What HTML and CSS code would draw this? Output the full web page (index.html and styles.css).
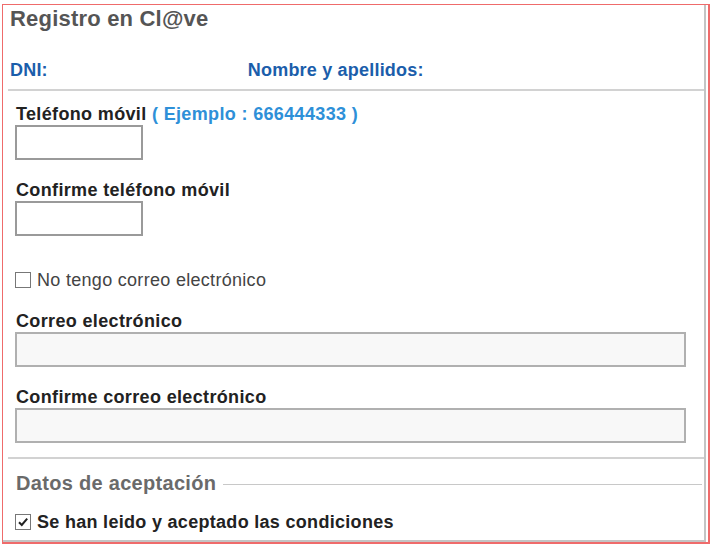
FILE: index.html
```html
<!DOCTYPE html>
<html lang="es">
<head>
  <meta charset="UTF-8" />
  <title>Registro en Cl@ve</title>
  <link rel="stylesheet" href="styles.css">
</head>
<body>
  <div class="frame">
    <div class="panel">
      <h1 class="title">Registro en Cl@ve</h1>
      <div class="ident">
        <span class="dni">DNI:</span>
        <span class="nombre">Nombre y apellidos:</span>
      </div>
      <hr class="sep">

      <div class="form">
        <label class="label first">Teléfono móvil <span class="hint">( Ejemplo : 666444333 )</span></label>
        <input type="text" class="input short">

        <label class="label">Confirme teléfono móvil</label>
        <input type="text" class="input short">

        <div class="check-row plain">
          <span class="box"></span>
          <span>No tengo correo electrónico</span>
        </div>

        <label class="label after-check">Correo electrónico</label>
        <input type="text" class="input wide">

        <label class="label">Confirme correo electrónico</label>
        <input type="text" class="input wide">
      </div>

      <hr class="sep lower">

      <div class="legend-row">
        <span class="legend">Datos de aceptación</span>
        <span class="legend-line"></span>
      </div>
      <div class="check-row strong">
        <span class="box">
          <svg width="12" height="12" viewBox="0 0 12 12"><path d="M2 6.2 L4.8 9 L10.2 2.6" fill="none" stroke="#222" stroke-width="2"/></svg>
        </span>
        <span>Se han leido y aceptado las condiciones</span>
      </div>
    </div>
  </div>
</body>
</html>
```

FILE: styles.css
```css
body {
  margin: 4px 0 0 2px;
  font-family: "Liberation Sans", Arial, sans-serif;
  background: #ffffff;
}
.frame {
  width: 708px;
  height: 540px;
  box-sizing: border-box;
  border: 1px solid #ef6b6b;
  border-bottom-width: 2px;
  border-right-width: 2px;
}
.panel {
  height: 100%;
  box-sizing: border-box;
  margin-right: 2px;
  border-right: 2px solid #c4c4c4;
  border-bottom: 2px solid #c4c4c4;
  padding: 2px 0 0 7px;
}
.title {
  margin: 0;
  font-size: 22px;
  line-height: 24px;
  letter-spacing: 0.2px;
  font-weight: bold;
  color: #555555;
}
.ident {
  display: flex;
  margin-top: 29px;
  font-size: 18px;
  line-height: 20px;
  letter-spacing: 0.2px;
  font-weight: bold;
  color: #1b5eab;
}
.nombre {
  margin-left: 200px;
}
.sep {
  margin: 9px 0 0 -2px;
  border: none;
  height: 2px;
  background: #d2d2d2;
}
.form {
  display: flex;
  flex-direction: column;
  align-items: flex-start;
  padding-left: 6px;
}
.label {
  margin-top: 20px;
  font-size: 18px;
  line-height: 20px;
  letter-spacing: 0.35px;
  font-weight: bold;
  color: #222222;
}
.label.first {
  margin-top: 13px;
}
.label.after-check {
  margin-top: 21px;
}
.hint {
  color: #2e90d8;
}
.input {
  margin: 1px 0 0 -1px;
  box-sizing: border-box;
  height: 35px;
  border: 2px solid #9a9a9a;
  border-radius: 0;
  background: #ffffff;
  font-size: 16px;
}
.input.short {
  width: 128px;
}
.input.wide {
  width: 671px;
  border-color: #b0b0b0;
  background: #f8f8f8;
}
.check-row {
  display: flex;
  align-items: center;
  gap: 6px;
  font-size: 18px;
  line-height: 20px;
  letter-spacing: 0.3px;
}
.check-row.plain {
  margin-top: 34px;
  color: #444444;
}
.check-row.strong {
  margin: 18px 0 0 6px;
  font-weight: bold;
  color: #222222;
}
.box {
  display: flex;
  align-items: center;
  justify-content: center;
  width: 14px;
  height: 14px;
  margin-left: -1px;
  border: 1px solid #777777;
  background: #ffffff;
}
.lower {
  margin-top: 14px;
}
.legend-row {
  display: flex;
  align-items: center;
  gap: 7px;
  margin: 13px 0 0 6px;
}
.legend {
  font-size: 20px;
  line-height: 22px;
  letter-spacing: 0.3px;
  font-weight: bold;
  color: #6a6a6a;
}
.legend-line {
  flex: 1;
  height: 1px;
  margin: 2px 2px 0 0;
  background: #c8c8c8;
}
```
